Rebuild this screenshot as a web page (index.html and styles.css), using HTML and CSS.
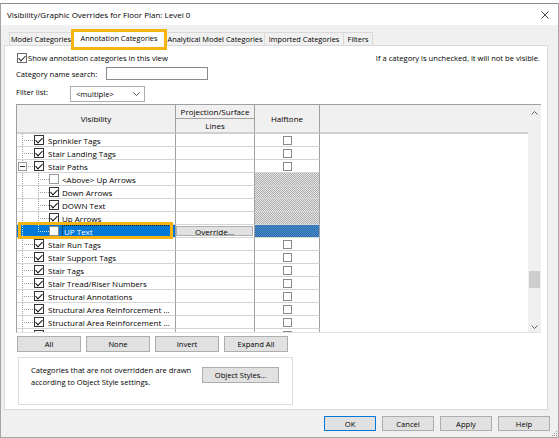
FILE: index.html
```html
<!DOCTYPE html>
<html lang="en">
<head>
  <meta charset="UTF-8">
  <meta name="viewport" content="width=device-width,initial-scale=1">
  <title>Visibility/Graphic Overrides for Floor Plan: Level 0</title>

  <link rel="stylesheet" href="styles.css">
</head>

<body>
<div class="window">
  <div class="titlebar">
    <span class="title">Visibility/Graphic Overrides for Floor Plan: Level 0</span>
    <svg class="close" width="8" height="8" viewBox="0 0 8 8"><path d="M0.5 0.5L7.5 7.5M7.5 0.5L0.5 7.5" stroke="#333" stroke-width="0.9"/></svg>
  </div>

  <div class="tabs">
    <div class="tab tab-model">Model Categories</div>
    <div class="tab tab-annotation active">Annotation Categories<span class="mark"></span></div>
    <div class="tab tab-analytical">Analytical Model Categories</div>
    <div class="tab tab-imported">Imported Categories</div>
    <div class="tab tab-filters">Filters</div>
  </div>

  <div class="panel">
    <div class="opts">
      <label class="check-label"><span class="cb on light"></span>Show annotation categories in this view</label>
      <span>If a category is unchecked, it will not be visible.</span>
    </div>

    <div class="field">
      <span class="search-label">Category name search:</span>
      <span class="input"></span>
    </div>

    <div class="field filter">
      <span class="filter-label">Filter list:</span>
      <span class="select">&lt;multiple&gt;
        <svg width="7" height="4" viewBox="0 0 7 4"><path d="M0.5 0.5L3.5 3.5L6.5 0.5" fill="none" stroke="#444" stroke-width="0.9"/></svg>
      </span>
    </div>

    <div class="grid">
      <div class="grid-main">
        <div class="grid-head">
          <div class="h vis-h">Visibility</div>
          <div class="h proj-top">Projection/Surface</div>
          <div class="h half-h">Halftone</div>
          <div class="h fill-h"></div>
          <div class="h proj-sub">Lines</div>
        </div>

        <div class="row">
          <div class="c vis t0"><span class="cb on"></span><span class="lbl">Sprinkler Tags</span></div>
          <div class="c proj"></div>
          <div class="c half"><span class="cb sm"></span></div>
        </div>
        <div class="row">
          <div class="c vis t0"><span class="cb on"></span><span class="lbl">Stair Landing Tags</span></div>
          <div class="c proj"></div>
          <div class="c half"><span class="cb sm"></span></div>
        </div>
        <div class="row">
          <div class="c vis t0 parent"><span class="expander"></span><span class="cb on"></span><span class="lbl">Stair Paths</span></div>
          <div class="c proj"></div>
          <div class="c half"><span class="cb sm"></span></div>
        </div>
        <div class="row">
          <div class="c vis t1"><span class="cb off"></span><span class="lbl">&lt;Above&gt; Up Arrows</span></div>
          <div class="c proj"></div>
          <div class="c half hatch"></div>
        </div>
        <div class="row">
          <div class="c vis t1"><span class="cb on"></span><span class="lbl">Down Arrows</span></div>
          <div class="c proj"></div>
          <div class="c half hatch"></div>
        </div>
        <div class="row">
          <div class="c vis t1"><span class="cb on"></span><span class="lbl">DOWN Text</span></div>
          <div class="c proj"></div>
          <div class="c half hatch"></div>
        </div>
        <div class="row">
          <div class="c vis t1"><span class="cb on"></span><span class="lbl">Up Arrows</span></div>
          <div class="c proj"></div>
          <div class="c half hatch"></div>
        </div>
        <div class="row sel">
          <div class="c vis t1 last"><span class="cb off"></span><span class="lbl focus">UP Text</span><span class="mark"></span></div>
          <div class="c proj"><span class="override">Override...</span></div>
          <div class="c half hatch"></div>
        </div>
        <div class="row">
          <div class="c vis t0"><span class="cb on"></span><span class="lbl">Stair Run Tags</span></div>
          <div class="c proj"></div>
          <div class="c half"><span class="cb sm"></span></div>
        </div>
        <div class="row">
          <div class="c vis t0"><span class="cb on"></span><span class="lbl">Stair Support Tags</span></div>
          <div class="c proj"></div>
          <div class="c half"><span class="cb sm"></span></div>
        </div>
        <div class="row">
          <div class="c vis t0"><span class="cb on"></span><span class="lbl">Stair Tags</span></div>
          <div class="c proj"></div>
          <div class="c half"><span class="cb sm"></span></div>
        </div>
        <div class="row">
          <div class="c vis t0"><span class="cb on"></span><span class="lbl">Stair Tread/Riser Numbers</span></div>
          <div class="c proj"></div>
          <div class="c half"><span class="cb sm"></span></div>
        </div>
        <div class="row">
          <div class="c vis t0"><span class="cb on"></span><span class="lbl">Structural Annotations</span></div>
          <div class="c proj"></div>
          <div class="c half"><span class="cb sm"></span></div>
        </div>
        <div class="row">
          <div class="c vis t0"><span class="cb on"></span><span class="lbl">Structural Area Reinforcement ...</span></div>
          <div class="c proj"></div>
          <div class="c half"><span class="cb sm"></span></div>
        </div>
        <div class="row">
          <div class="c vis t0"><span class="cb on"></span><span class="lbl">Structural Area Reinforcement ...</span></div>
          <div class="c proj"></div>
          <div class="c half"><span class="cb sm"></span></div>
        </div>
        <div class="row">
          <div class="c vis t0"><span class="cb on"></span><span class="lbl">Structural Fabric Reinforcement ...</span></div>
          <div class="c proj"></div>
          <div class="c half"><span class="cb sm"></span></div>
        </div>
      </div>

      <div class="vscroll">
        <svg class="arrow-up" width="7" height="4" viewBox="0 0 7 4"><path d="M0.5 3.5L3.5 0.5L6.5 3.5" fill="none" stroke="#606060" stroke-width="1"/></svg>
        <div class="thumb"></div>
        <svg class="arrow-down" width="7" height="4" viewBox="0 0 7 4"><path d="M0.5 0.5L3.5 3.5L6.5 0.5" fill="none" stroke="#606060" stroke-width="1"/></svg>
      </div>
    </div>

    <div class="grid-buttons">
      <a href="javascript:" class="button">All</a>
      <a href="javascript:" class="button">None</a>
      <a href="javascript:" class="button">Invert</a>
      <a href="javascript:" class="button">Expand All</a>
    </div>

    <div class="info">
      <p class="info-text">Categories that are not overridden are drawn according to Object Style settings.</p>
      <a href="javascript:" class="button styles-button">Object Styles...</a>
    </div>
  </div>

  <div class="footer">
    <a href="javascript:" class="button default">OK</a>
    <a href="javascript:" class="button">Cancel</a>
    <a href="javascript:" class="button">Apply</a>
    <a href="javascript:" class="button">Help</a>
    <svg class="grip" width="7" height="7" viewBox="0 0 7 7">
      <rect x="5" y="1" width="1" height="1" fill="#9a9a9a"/>
      <rect x="3" y="3" width="1" height="1" fill="#9a9a9a"/>
      <rect x="5" y="3" width="1" height="1" fill="#9a9a9a"/>
      <rect x="1" y="5" width="1" height="1" fill="#9a9a9a"/>
      <rect x="3" y="5" width="1" height="1" fill="#9a9a9a"/>
      <rect x="5" y="5" width="1" height="1" fill="#9a9a9a"/>
    </svg>
  </div>
</div>
</body>
</html>
```

FILE: styles.css
```css
* {
  margin: 0;
  padding: 0;
  box-sizing: border-box;
}

body {
  background-color: #fff;
  font-family: "Open Sans", "Noto Sans", sans-serif;
  font-size: 7.6px;
  color: #000;
}

.window {
  display: flex;
  flex-direction: column;
  height: 435px;
  margin-top: 3px;

  background-color: #f0f0f0;
  border: 1px solid #a3a3a3;
  border-top-color: #8c8c8c;
}

/* title */
.titlebar {
  display: flex;
  flex: none;
  justify-content: space-between;
  align-items: center;
  height: 21px;
  padding: 0 9px 0 6px;

  background-color: #fff;
  font-size: 8px;
}

/* tabs */
.tabs {
  display: flex;
  flex: none;
  align-items: flex-end;
  height: 16px;
  margin-top: 4px;
  padding-left: 8px;
  font-size: 7.4px;
}

.tab {
  height: 13px;
  margin-right: -1px;

  line-height: 12px;
  text-align: center;
  white-space: nowrap;
  border: 1px solid #d9d9d9;
  border-bottom: none;
}

.tab-model { width: 64px; }
.tab-annotation { width: 94px; }
.tab-analytical { width: 100px; }
.tab-imported { width: 80px; }
.tab-filters { width: 30px; }

.tab.active {
  position: relative;
  z-index: 1;
  height: 16px;
  margin-bottom: -1px;

  line-height: 14px;
  background-color: #fff;
}

.mark {
  position: absolute;
  border: 3px solid #f5b40f;
  pointer-events: none;
}

.tab .mark {
  top: -2px;
  right: -2px;
  bottom: -4px;
  left: -2px;
}

/* panel */
.panel {
  display: flex;
  flex: none;
  flex-direction: column;
  height: 365px;
  margin: 0 10px 0 3px;

  background-color: #fff;
  border: 1px solid #d9d9d9;
}

.opts {
  display: flex;
  justify-content: space-between;
  align-items: center;
  height: 12px;
  margin: 6px 7px 0 12px;
}

.check-label {
  display: flex;
  align-items: center;
  gap: 1px;
}

.cb {
  display: inline-flex;
  flex: none;
  justify-content: center;
  align-items: center;
  width: 10px;
  height: 10px;

  background-color: #fff;
  border: 1px solid #333;
}

.cb.on::after {
  content: "";
  width: 3px;
  height: 6px;
  border: solid #111;
  border-width: 0 1.3px 1.3px 0;
  transform: translateY(-1px) rotate(45deg);
}

.cb.light {
  border-color: #6a6a6a;
}

.cb.light::after {
  border-color: #333;
  border-width: 0 1px 1px 0;
}

.cb.off {
  border-color: #9a9a9a;
}

.cb.sm {
  width: 9px;
  height: 9px;
  border-color: #8a8a8a;
}

.field {
  display: flex;
  align-items: center;
  height: 13px;
  margin: 3px 0 0 11px;
}

.search-label {
  width: 90px;
}

.input {
  width: 102px;
  height: 13px;
  border: 1px solid #8a8a8a;
}

.field.filter {
  align-items: flex-start;
  height: 16px;
  margin-top: 6px;
}

.filter-label {
  width: 54px;
  padding-top: 1px;
}

.select {
  display: flex;
  justify-content: space-between;
  align-items: center;
  width: 75px;
  height: 16px;
  padding: 0 4px 0 5px;

  background-color: #fff;
  border: 1px solid #adadad;
}

/* grid */
.grid {
  display: flex;
  width: 525px;
  height: 229px;
  margin: 2px 0 0 11px;
  overflow: hidden;

  border-top: 1px solid #a0a0a0;
  border-left: 1px solid #a0a0a0;
  border-bottom: 1px solid #e3e3e3;
}

.grid-main {
  flex: 1;
  overflow: hidden;
  font-size: 8px;
}

.grid-head {
  display: grid;
  grid-template-columns: 159px 79px 65px 1fr;
  grid-template-rows: 14px 15px;
}

.h {
  display: flex;
  justify-content: center;
  align-items: center;

  background-color: #f0f0f0;
  border-right: 1px solid #a0a0a0;
  border-bottom: 2px solid #cfcfcf;
}

.vis-h {
  grid-row: 1 / 3;
  grid-column: 1;
}

.proj-top {
  grid-row: 1;
  grid-column: 2;
  border-bottom: 1px solid #a0a0a0;
}

.proj-sub {
  grid-row: 2;
  grid-column: 2;
}

.half-h {
  grid-row: 1 / 3;
  grid-column: 3;
}

.fill-h {
  grid-row: 1 / 3;
  grid-column: 4;
  border-right: none;
}

.row {
  display: flex;
  height: 13px;
}

.c {
  height: 13px;
  border-right: 1px solid #a0a0a0;
  border-bottom: 1px solid #d4d4d4;
}

.vis {
  position: relative;
  display: flex;
  align-items: center;
  width: 159px;
  padding-left: 17px;
  white-space: nowrap;

  background-repeat: no-repeat;
}

.vis .lbl {
  margin-left: 4px;
}

.vis.t0 {
  background-image:
    repeating-linear-gradient(to bottom, #a0a0a0 0 1px, transparent 1px 2px),
    repeating-linear-gradient(to right, #a0a0a0 0 1px, transparent 1px 2px);
  background-position: 5px 0, 5px 6px;
  background-size: 1px 100%, 11px 1px;
}

.vis.t1 {
  padding-left: 32px;
  background-image:
    repeating-linear-gradient(to bottom, #a0a0a0 0 1px, transparent 1px 2px),
    repeating-linear-gradient(to bottom, #a0a0a0 0 1px, transparent 1px 2px),
    repeating-linear-gradient(to right, #a0a0a0 0 1px, transparent 1px 2px);
  background-position: 5px 0, 21px 0, 21px 6px;
  background-size: 1px 100%, 1px 100%, 11px 1px;
}

.vis.t1 .lbl {
  margin-left: 3px;
}

.vis.parent {
  padding-left: 1px;
}

.expander {
  display: flex;
  justify-content: center;
  align-items: center;
  width: 9px;
  height: 9px;
  margin-right: 7px;

  background-color: #fff;
  border: 1px solid #999;
}

.expander::after {
  content: "";
  width: 5px;
  height: 1px;
  background-color: #333;
}

.proj {
  width: 79px;
}

.half {
  display: flex;
  justify-content: center;
  align-items: center;
  width: 65px;
}

.half.hatch {
  background: repeating-conic-gradient(#b0b0b0 0 25%, #e4e4e4 0 50%) 0 0 / 2px 2px;
}

/* selected row */
.row.sel .vis {
  color: #fff;
  background-color: #0078d7;
  background-image:
    repeating-linear-gradient(to bottom, #cfe3f5 0 1px, transparent 1px 2px),
    repeating-linear-gradient(to bottom, #cfe3f5 0 1px, transparent 1px 2px),
    repeating-linear-gradient(to right, #cfe3f5 0 1px, transparent 1px 2px);
  background-size: 1px 100%, 1px 7px, 11px 1px;
}

.row.sel .cb {
  border-color: #8a8a8a;
}

.lbl.focus {
  flex: 1;
  align-self: stretch;
  display: flex;
  align-items: center;
  margin-right: 2px;
  padding-left: 1px;
  border: 1px dotted #1b1b1b;
}

.vis .mark {
  top: -3px;
  right: 2px;
  bottom: -2px;
  left: 1px;
}

.row.sel .proj {
  padding: 1px 1px 1px 0;
}

.override {
  display: flex;
  justify-content: center;
  align-items: center;
  height: 100%;

  background-color: #e1e1e1;
  border: 1px solid #adadad;
}

.row.sel .half.hatch {
  background: repeating-conic-gradient(#2a6aa8 0 25%, #4b8fd0 0 50%) 0 0 / 2px 2px;
}

/* scrollbar */
.vscroll {
  display: flex;
  flex: none;
  flex-direction: column;
  align-items: center;
  width: 13px;
  padding: 6px 0 3px;

  background-color: #f0f0f0;
}

.thumb {
  width: 11px;
  height: 17px;
  margin-top: 156px;
  background-color: #cdcdcd;
}

.arrow-down {
  margin-top: auto;
}

/* buttons */
.button {
  display: flex;
  justify-content: center;
  align-items: center;

  color: #000;
  text-decoration: none;
  white-space: nowrap;
  background-color: #e1e1e1;
  border: 1px solid #adadad;
}

.grid-buttons {
  display: flex;
  gap: 5px;
  margin: 3px 0 0 12px;
}

.grid-buttons .button {
  width: 64px;
  height: 16px;
}

.info {
  display: flex;
  align-items: flex-start;
  width: 275px;
  height: 48px;
  margin: 5px 0 0 13px;
  padding: 6px 0 0 12px;

  border: 1px solid #dcdcdc;
}

.info-text {
  width: 171px;
  padding-right: 8px;
  line-height: 12px;
}

.styles-button {
  width: 77px;
  height: 16px;
  margin-top: 3px;
}

.footer {
  display: flex;
  flex: 1;
  justify-content: flex-end;
  align-items: flex-start;
  gap: 6px;
  padding: 6px 0 0 0;
}

.footer .button {
  width: 52px;
  height: 15px;
}

.footer .button.default {
  border-color: #0078d7;
}

.grip {
  align-self: flex-end;
  margin-left: -5px;
}
```
